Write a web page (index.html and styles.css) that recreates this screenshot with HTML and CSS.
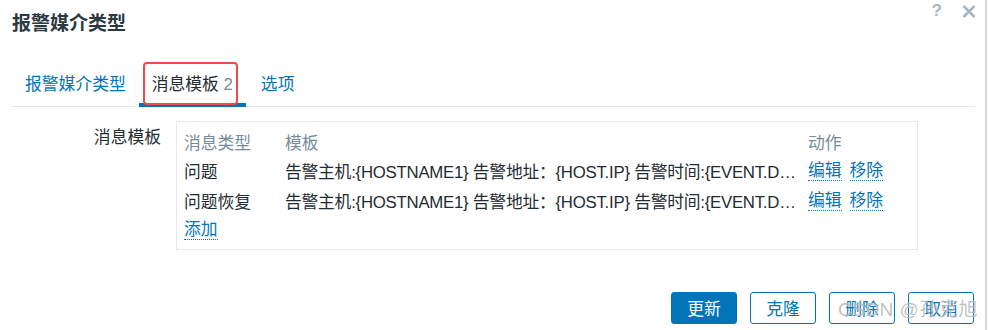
FILE: index.html
```html
<!DOCTYPE html>
<html lang="zh-CN">
<head>
<meta charset="utf-8">
<title>报警媒介类型</title>
<link rel="stylesheet" href="styles.css">
</head>
<body>
<div class="dialog">
  <header class="head">
    <h1 class="title">报警媒介类型</h1>
    <div class="head-btns">
      <span class="help">?</span>
      <svg class="close" width="14" height="13" viewBox="0 0 14 13"><path d="M1.5 1 L12.5 12 M12.5 1 L1.5 12" stroke="#aab6bd" stroke-width="2.6" fill="none"/></svg>
    </div>
  </header>

  <nav class="tabs">
    <a class="tab">报警媒介类型</a>
    <a class="tab active">消息模板 <span class="count">2</span></a>
    <a class="tab">选项</a>
  </nav>

  <div class="form-row">
    <div class="label">消息模板</div>
    <div class="table-box">
      <div class="grid">
        <div class="th">消息类型</div>
        <div class="th">模板</div>
        <div class="th">动作</div>

        <div class="td">问题</div>
        <div class="td tpl">告警主机:{HOSTNAME1} 告警地址：{HOST.IP} 告警时间:{EVENT.DATE} {EVENT.TIME} 告警等级:{TRIGGER.SEVERITY}</div>
        <div class="td actions"><a class="link">编辑</a><a class="link">移除</a></div>

        <div class="td">问题恢复</div>
        <div class="td tpl">告警主机:{HOSTNAME1} 告警地址：{HOST.IP} 告警时间:{EVENT.DATE} {EVENT.TIME} 恢复时间:{EVENT.RECOVERY.TIME}</div>
        <div class="td actions"><a class="link">编辑</a><a class="link">移除</a></div>

        <div class="td"><a class="link">添加</a></div>
      </div>
    </div>
  </div>

  <footer class="buttons">
    <button class="btn primary">更新</button>
    <button class="btn">克隆</button>
    <button class="btn">删除</button>
    <button class="btn">取消</button>
    <span class="watermark">CSDN @孙克旭</span>
  </footer>
</div>
</body>
</html>
```

FILE: styles.css
```css
html, body {
  margin: 0;
  padding: 0;
  background: #ffffff;
}

body {
  font-family: "Liberation Sans", "Noto Sans CJK SC", sans-serif;
  font-size: 16.8px;
  color: #1f2c33;
  width: 989px;
  height: 330px;
  overflow: hidden;
}

.dialog {
  position: relative;
  width: 985px;
  height: 330px;
  border-right: 2px solid #d3d7d9;
  box-sizing: content-box;
}

.head {
  display: flex;
  justify-content: space-between;
  align-items: flex-start;
}

.title {
  margin: 12px 0 0 12px;
  font-size: 19px;
  line-height: 24px;
  font-weight: bold;
  color: #2b3942;
}

.head-btns {
  display: flex;
  align-items: center;
  gap: 20px;
  margin: 3px 9px 0 0;
}

.help {
  font-family: "Liberation Sans", sans-serif;
  font-weight: bold;
  font-size: 17px;
  line-height: 16px;
  color: #aab6bd;
}

.close {
  display: block;
}

.tabs {
  display: flex;
  margin: 37px 10px 0 11px;
  border-bottom: 1px solid #e6e9eb;
}

.tab {
  padding: 0 13px 6px;
  line-height: 24px;
  border-bottom: 4px solid transparent;
  margin-bottom: -1px;
  color: #0275b8;
  cursor: pointer;
}

.tab:first-child {
  padding-left: 14px;
}

.tab:last-child {
  padding-left: 15px;
}

.tab.active {
  position: relative;
  color: #1f2c33;
  border-bottom-color: #0275b8;
}

.tab.active::after {
  content: "";
  position: absolute;
  left: 4px;
  right: 8px;
  top: -11px;
  bottom: -2px;
  border: 2px solid #f04a4a;
  border-radius: 4px;
}

.count {
  color: #768d99;
}

.form-row {
  display: flex;
  margin-top: 14px;
}

.label {
  width: 161px;
  text-align: right;
  line-height: 24px;
  padding-top: 5px;
  margin-right: 15px;
}

.table-box {
  border: 1px solid #e6e8e9;
  padding: 5px 0 4px 7px;
  box-sizing: content-box;
  width: 733px;
}

.grid {
  display: grid;
  grid-template-columns: 101px 523px auto;
  grid-auto-rows: 29.5px;
  align-items: center;
}

.th {
  color: #768d99;
}

.td {
  white-space: nowrap;
}

.tpl {
  overflow: hidden;
  text-overflow: ellipsis;
  padding-right: 11px;
  letter-spacing: -0.25px;
}

.actions {
  display: flex;
  gap: 8px;
}

.link {
  color: #0275b8;
  border-bottom: 1px dotted #0275b8;
  line-height: 19px;
  cursor: pointer;
}

.buttons {
  display: flex;
  justify-content: flex-end;
  gap: 13px;
  padding-right: 11px;
  margin-top: 42px;
}

.btn {
  width: 66px;
  height: 32px;
  box-sizing: border-box;
  border: 1px solid #0275b8;
  border-radius: 3px;
  background: #ffffff;
  color: #0275b8;
  font-family: "Liberation Sans", "Noto Sans CJK SC", sans-serif;
  font-size: 16.8px;
  padding: 0;
}

.btn.primary {
  background: #0275b8;
  color: #ffffff;
}

.watermark {
  position: absolute;
  left: 838px;
  top: 298px;
  font-size: 19px;
  line-height: 24px;
  color: rgba(140, 140, 140, 0.55);
  text-shadow: 0 0 1px rgba(255, 255, 255, 0.8);
  letter-spacing: 0.5px;
  pointer-events: none;
}
```
